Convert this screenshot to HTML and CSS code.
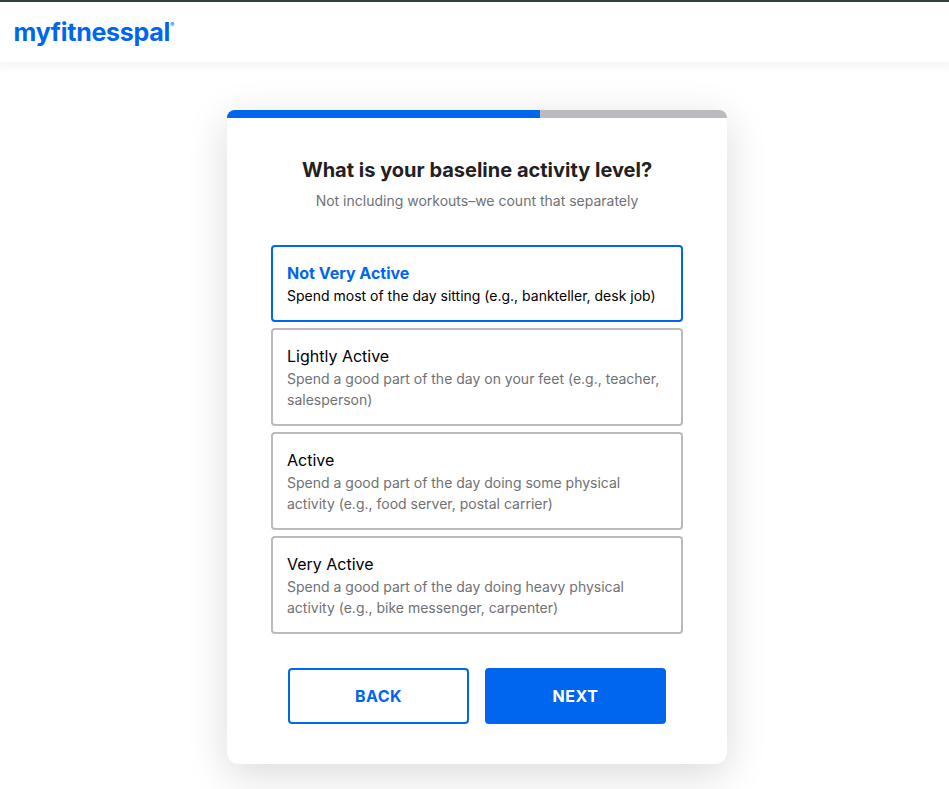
FILE: index.html
```html
<!DOCTYPE html>
<html lang="en">
<head>
<meta charset="utf-8">
<title>MyFitnessPal</title>
<link rel="stylesheet" href="styles.css">
</head>
<body>
<header class="header"><a class="logo">myfitnesspal<span class="mark">®</span></a></header>
<main class="card">
  <div class="progress"><div class="progress-fill"></div></div>
  <h1 class="title">What is your baseline activity level?</h1>
  <p class="subtitle">Not including workouts–we count that separately</p>
  <div class="options">
    <div class="option selected"><div class="name">Not Very Active</div><div class="desc">Spend most of the day sitting (e.g., bankteller, desk job)</div></div>
    <div class="option"><div class="name">Lightly Active</div><div class="desc">Spend a good part of the day on your feet (e.g., teacher, salesperson)</div></div>
    <div class="option"><div class="name">Active</div><div class="desc">Spend a good part of the day doing some physical activity (e.g., food server, postal carrier)</div></div>
    <div class="option"><div class="name">Very Active</div><div class="desc">Spend a good part of the day doing heavy physical activity (e.g., bike messenger, carpenter)</div></div>
  </div>
  <div class="actions"><button class="btn back">BACK</button><button class="btn next">NEXT</button></div>
</main>
</body>
</html>
```
FILE: styles.css
```css
* { box-sizing: border-box; }
body { margin: 0; height: 789px; overflow: hidden; background: #fff; font-family: Inter, sans-serif; color: #000; }
.header { height: 62px; border-top: 2px solid #333f40; padding: 14px 13.5px 0; box-shadow: 0 0 10px 4px rgba(0,0,0,.05); }
.logo { display: flex; align-items: flex-start; font-size: 25px; line-height: 33px; font-weight: 700; letter-spacing: -0.25px; color: #0066ee; }
.mark { font-size: 6px; line-height: 6px; margin: 6px 0 0 0; letter-spacing: 0; }
.card { width: 500px; height: 654px; margin: 48px 0 0 227px; border-radius: 8px 8px 12px 12px; overflow: hidden; background: #fff; box-shadow: 0 10px 40px rgba(0,0,0,.15); }
.progress { height: 8px; background: #bababf; }
.progress-fill { width: 62.5%; height: 8px; background: #0066ee; }
.title { margin: 38px 0 0; text-align: center; font-size: 20px; line-height: 28px; font-weight: 700; color: #212121; }
.subtitle { margin: 6px 0 0; text-align: center; font-size: 14px; line-height: 21px; color: #707174; }
.options { display: flex; flex-direction: column; gap: 6px; margin: 34px 44px 0; }
.option { border: 2px solid #bababf; border-radius: 4px; padding: 14px; height: 98px; }
.option.selected { height: 77px; border-color: #0066ee; }
.name { font-size: 16px; line-height: 24px; }
.desc { font-size: 14px; line-height: 21px; color: #707174; }
.selected .name { font-weight: 700; color: #0066ee; }
.selected .desc { color: #000; }
.actions { display: flex; justify-content: center; gap: 16px; margin-top: 34px; }
.btn { width: 181px; height: 56px; border: 2px solid #0066ee; border-radius: 4px; font: 700 16px Inter, sans-serif; letter-spacing: 0.5px; padding: 0; }
.back { background: #fff; color: #0066ee; }
.next { background: #0066ee; color: #fff; }
```
